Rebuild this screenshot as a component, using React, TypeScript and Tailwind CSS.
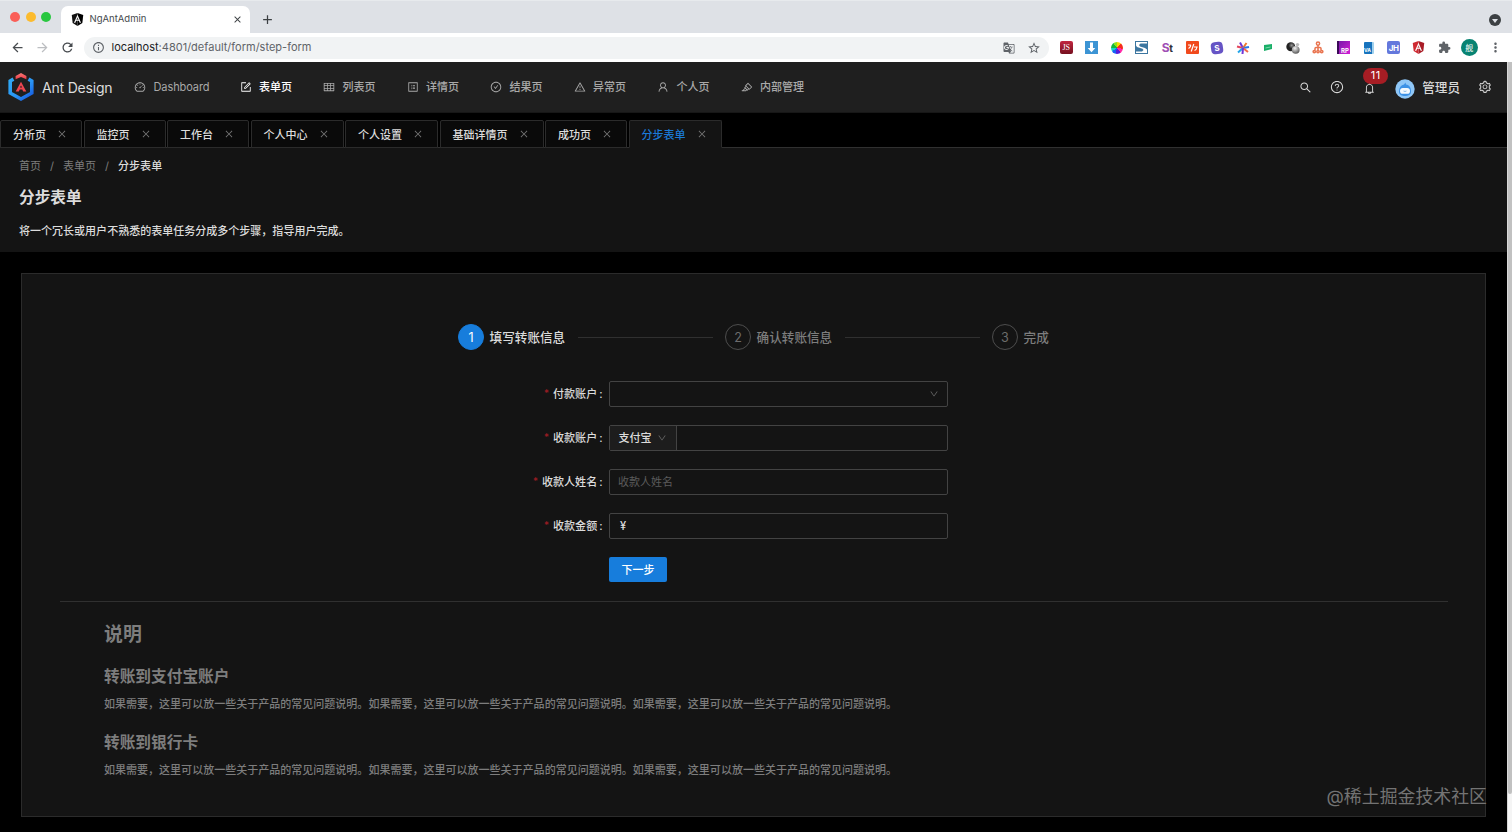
import type { ReactNode } from 'react';
import {
  AiOutlineBell,
  AiOutlineCheckCircle,
  AiOutlineClose,
  AiOutlineDashboard,
  AiOutlineDown,
  AiOutlineForm,
  AiOutlineHighlight,
  AiOutlineProfile,
  AiOutlineQuestionCircle,
  AiOutlineSearch,
  AiOutlineSetting,
  AiOutlineTable,
  AiOutlineUser,
  AiOutlineWarning,
} from 'react-icons/ai';
import {
  MdArrowBack,
  MdArrowForward,
  MdClose,
  MdAdd,
  MdExtension,
  MdGTranslate,
  MdMoreVert,
  MdOutlineInfo,
  MdRefresh,
  MdStarBorder,
} from 'react-icons/md';

const menus = [
  { icon: AiOutlineDashboard, label: 'Dashboard', width: 'w-[105.5px]' },
  { icon: AiOutlineForm, label: '表单页', width: 'w-[83.5px]', active: true },
  { icon: AiOutlineTable, label: '列表页', width: 'w-[83.5px]' },
  { icon: AiOutlineProfile, label: '详情页', width: 'w-[83.5px]' },
  { icon: AiOutlineCheckCircle, label: '结果页', width: 'w-[83.5px]' },
  { icon: AiOutlineWarning, label: '异常页', width: 'w-[83.5px]' },
  { icon: AiOutlineUser, label: '个人页', width: 'w-[83.5px]' },
  { icon: AiOutlineHighlight, label: '内部管理', width: 'w-[83.5px]' },
];

const tabs = [
  { label: '分析页', width: 'w-[82px]' },
  { label: '监控页', width: 'w-[82px]' },
  { label: '工作台', width: 'w-[82px]' },
  { label: '个人中心', width: 'w-[93px]' },
  { label: '个人设置', width: 'w-[93px]' },
  { label: '基础详情页', width: 'w-[104px]' },
  { label: '成功页', width: 'w-[82px]' },
  { label: '分步表单', width: 'w-[93px]', active: true },
];

const faqText = '如果需要，这里可以放一些关于产品的常见问题说明。';

function AngularShield({ size, left, right }: { size: number; left: string; right: string }) {
  return (
    <svg width={size} height={size} viewBox="2 1 20 22">
      <path d="M12 1 2.3 4.5 3.8 18 12 23z" fill={left} />
      <path d="m12 1 9.7 3.5L20.2 18 12 23z" fill={right} />
      <path d="M12 4 6 17.3h2.4l1.2-3h4.8l1.2 3H18zm0 4.4 1.7 4h-3.4z" fill="#fff" />
    </svg>
  );
}

function Logo() {
  return (
    <svg width="26" height="30" viewBox="0 0 26 30">
      <defs>
        <linearGradient id="hex" x1="0" y1="0" x2="1" y2="1">
          <stop offset="0" stopColor="#2fa9f5" />
          <stop offset="0.55" stopColor="#2a95f5" />
          <stop offset="1" stopColor="#1557e0" />
        </linearGradient>
        <linearGradient id="cap" x1="0" y1="0" x2="0" y2="1">
          <stop offset="0" stopColor="#f37b77" />
          <stop offset="1" stopColor="#ee3845" />
        </linearGradient>
      </defs>
      <path d="M5.5 7.2 2.2 9v12L13 27l10.8-6V9l-3.3-1.8" fill="none" stroke="url(#hex)" strokeWidth="3.6" />
      <path d="M13 1 7.6 4.1v3.2L13 4.9l5.4 2.4V4.1z" fill="url(#cap)" />
      <path d="m13 9.7-5.3 9.7h3.1l.9-2h2.6l.9 2h3.1zm0 3.7 1.1 2.2h-2.2z" fill="#ee4650" />
    </svg>
  );
}

function Avatar() {
  return (
    <svg width="20" height="20" viewBox="0 0 20 20">
      <circle cx="10" cy="10" r="9.7" fill="#8fc7f7" />
      <path d="M4 12.5c0-4 2-6.4 5-7l1.5-2 .5 2c3.5.5 5 3 5 7 0 3.5-3 4.5-6 4.5s-6-1-6-4.5z" fill="#3d92e6" />
      <rect x="5" y="9" width="10" height="5.8" rx="2.9" fill="#f4faff" />
      <path d="M8.5 12q1.5 1 3 0" stroke="#5d9fdc" strokeWidth=".7" fill="none" />
    </svg>
  );
}

function Extensions() {
  const icons: ReactNode[] = [
    <span className="flex h-[13px] w-[13px] items-center justify-center rounded-[2px] bg-linear-to-b from-[#c22640] to-[#75101f] font-['Liberation_Serif'] text-[8px] text-white">JS</span>,
    <svg width="13" height="13" viewBox="0 0 13 13">
      <path d="M0 0h13v13H0z" fill="#3c94d4" />
      <path d="M5 1.5h3V7h2.3l-3.8 4.3L2.7 7H5z" fill="#fff" />
    </svg>,
    <span className="h-[12px] w-[12px] rounded-full bg-[conic-gradient(#f7d900_0_12%,#f42e1c_12%_27%,#ff2aa7_27%_40%,#551bdb_40%_54%,#1663f5_54%_66%,#15d5c8_66%_76%,#14b93a_76%_90%,#8fe21b_90%)]" />,
    <svg width="13" height="13" viewBox="0 0 13 13">
      <path d="M0 0h13v13H0z" fill="#3c76a0" />
      <path d="M1 1h11v1.5H5.5L4 4l1 1.5L10 7l2 1.5V12H1v-1.5h6L8.5 9l-1-1.2L2 6 1 4.5z" fill="#fff" />
    </svg>,
    <span className="font-['Inter'] text-[12px] leading-none font-bold tracking-[-0.5px] text-[#a04fb5]">
      S<span className="text-[10px] text-[#303038]">t</span>
    </span>,
    <svg width="13" height="13" viewBox="0 0 13 13">
      <rect width="13" height="13" rx="1" fill="#f1491c" />
      <path d="M2 4h2.5Q5 6 2.5 7.5M7.8 3 5.2 10.5M8 6h3Q10.5 9 8.5 9.5" fill="none" stroke="#fff" strokeWidth="1.2" />
    </svg>,
    <span className="flex h-[12px] w-[12px] rotate-[-8deg] items-center justify-center rounded-[4px] bg-[#6654c5] font-['Inter'] text-[8px] font-bold text-white">S</span>,
    <svg width="14" height="14" viewBox="0 0 14 14" fill="none" strokeWidth="2">
      <path d="M7 7 4 1.5" stroke="#6a35d9" />
      <path d="M7 7 10.5 2" stroke="#f07a2a" />
      <path d="M1 5.5 7 7" stroke="#e4475e" />
      <path d="m7 7 6-1" stroke="#2879e8" />
      <path d="M2 11.5 7 7" stroke="#23a5e9" />
      <path d="m7 7 5 4" stroke="#f3684a" />
      <path d="m7 7-.5 6" stroke="#7236d8" />
    </svg>,
    <svg width="8" height="7" viewBox="0 0 8 7">
      <path d="m0 1 8-1v5L0 7z" fill="#19af68" />
      <path d="m1.5 4 5-1" stroke="#a6e6c6" strokeWidth=".7" />
    </svg>,
    <svg width="14" height="12" viewBox="0 0 14 12">
      <defs>
        <radialGradient id="ballDark" cx=".6" cy=".35" r=".7">
          <stop stopColor="#999" />
          <stop offset=".5" stopColor="#222" />
        </radialGradient>
        <radialGradient id="ballLight" cx=".4" cy=".3" r=".8">
          <stop stopColor="#f2f2f2" />
          <stop offset="1" stopColor="#444" />
        </radialGradient>
      </defs>
      <circle cx="4.8" cy="4.8" r="4.5" fill="url(#ballDark)" />
      <circle cx="9.7" cy="7.8" r="3.9" fill="url(#ballLight)" />
      <circle cx="11.5" cy="2.6" r="1.7" fill="#bbb" />
    </svg>,
    <svg width="12" height="13" viewBox="0 0 12 13" fill="none" stroke="#e9744f" strokeWidth="1.5">
      <circle cx="6" cy="2.6" r="1.6" />
      <path d="M6 4v5M3 9V7.500Q3 6.500 4 6.500h4q1 0 1 1V9" />
      <circle cx="2.3" cy="10.6" r="1.2" />
      <circle cx="6" cy="10.6" r="1.2" />
      <circle cx="9.7" cy="10.6" r="1.2" />
    </svg>,
    <span className="flex h-[13px] w-[13px] items-end justify-end border-l-2 border-[#3b0a58] bg-linear-to-br from-[#7a18a8] to-[#d51bd8] pr-px font-['Inter'] text-[6px] leading-[7px] font-bold text-white">RP</span>,
    <span className="flex h-[12px] w-[10px] items-end justify-center rounded-[1px] border-r-2 border-[#9fd0ec] bg-[#1773bd] font-['Inter'] text-[5px] leading-[7px] font-bold text-white">VA</span>,
    <span className="flex h-[13px] w-[13px] items-center justify-center rounded-[2px] bg-[#6478dc] font-['Inter'] text-[8px] font-bold tracking-[-0.3px] text-white">JH</span>,
    <AngularShield size={13} left="#cf2a32" right="#a91c26" />,
    <MdExtension className="text-[13px] text-[#5f6368]" />,
  ];

  return (
    <div className="flex">
      {icons.map((icon, i) => (
        <span key={i} className="flex h-[17px] w-[25.2px] items-center justify-center">
          {icon}
        </span>
      ))}
    </div>
  );
}

function Browser() {
  return (
    <div className="h-[62px] bg-white font-['Inter'] text-[#5f6368]">
      <div className="flex h-[33px] items-end border-t border-[#e7eaed] bg-[#dee1e6]">
        <div className="flex h-full w-[61px] items-center gap-[5.5px] pl-[10px]">
          <span className="h-[10px] w-[10px] rounded-full bg-[#fa5f58]" />
          <span className="h-[10px] w-[10px] rounded-full bg-[#fcbb2e]" />
          <span className="h-[10px] w-[10px] rounded-full bg-[#29c740]" />
        </div>
        <div className="flex h-[27px] w-[189px] items-center rounded-t-[7px] bg-white pl-[10px]">
          <AngularShield size={13} left="#111" right="#000" />
          <span className="ml-[5.5px] text-[9.5px] text-[#45494d]">NgAntAdmin</span>
          <MdClose className="mr-[7px] ml-auto text-[11px] text-[#3c4043]" />
        </div>
        <MdAdd className="mb-[6px] ml-[10px] text-[15px] text-[#3c4043]" />
        <span className="mr-[11px] mb-[7px] ml-auto flex h-[12px] w-[12px] items-center justify-center rounded-full bg-[#3c4043]">
          <span className="mt-px h-0 w-0 border-x-[3px] border-t-[4px] border-x-transparent border-t-[#dee1e6]" />
        </span>
      </div>
      <div className="flex h-[29px] items-center">
        <MdArrowBack className="ml-[10px] text-[15px] text-[#484c50]" />
        <MdArrowForward className="ml-[10px] text-[15px] text-[#bcbec1]" />
        <MdRefresh className="ml-[10px] text-[15px] text-[#484c50]" />
        <div className="ml-[9px] flex h-[22px] w-[965px] items-center rounded-full bg-[#f1f3f4] pr-[8px] pl-[8px]">
          <MdOutlineInfo className="text-[13px]" />
          <span className="ml-[6.5px] text-[11px] tracking-[0.01px]">
            <span className="text-[#202124]">localhost</span>:4801/default/form/step-form
          </span>
          <MdGTranslate className="ml-auto text-[12px]" />
          <MdStarBorder className="ml-[12px] text-[14px]" />
        </div>
        <div className="ml-[4.7px]">
          <Extensions />
        </div>
        <span className="ml-[4px] flex h-[17px] w-[17px] items-center justify-center rounded-full bg-[#088372] font-['Noto_Sans_CJK_SC'] text-[8px] text-white">舰</span>
        <MdMoreVert className="ml-[10px] text-[15px]" />
      </div>
    </div>
  );
}

function Header() {
  return (
    <header className="flex h-[50px] items-center bg-[#1f1f1f]">
      <div className="flex w-[134px] items-center pl-[8px] text-[14px] text-[#dcdcdc]">
        <Logo />
        <span className="ml-[8px] tracking-[-0.2px]">Ant Design</span>
      </div>
      {menus.map(({ icon: Icon, label, width, active }) => (
        <div key={label} className={`${width} flex shrink-0 items-center gap-[7.5px] whitespace-nowrap ${active ? 'font-medium text-white' : 'text-[#a9a9a9]'}`}>
          <Icon className="text-[12px]" />
          <span className={label === 'Dashboard' ? 'tracking-[-0.1px]' : 'pt-px font-medium'}>{label}</span>
        </div>
      ))}
      <div className="ml-auto flex items-center pr-[15px] text-[#d9d9d9]">
        <AiOutlineSearch className="text-[13px]" />
        <AiOutlineQuestionCircle className="ml-[18px] text-[14px]" />
        <span className="relative ml-[19px]">
          <AiOutlineBell className="mt-[2px] text-[13px]" />
          <span className="absolute -top-[12px] left-0 flex h-[16px] w-[25px] items-center justify-center rounded-full bg-[#a61d24] text-[11px] tracking-[0.5px] text-white">11</span>
        </span>
        <span className="mt-[3px] ml-[19px]">
          <Avatar />
        </span>
        <span className="ml-[7px] pt-[2px] text-[12.6px] font-medium">管理员</span>
        <AiOutlineSetting className="ml-[18px] text-[14px]" />
      </div>
    </header>
  );
}

function PageTabs() {
  return (
    <div className="flex h-[36px] items-end gap-[1.5px] border-t border-[#171717] bg-black shadow-[inset_0_-1px_0_#303030]">
      {tabs.map((tab) => (
        <div
          key={tab.label}
          className={`${tab.width} flex h-[28px] shrink-0 items-center justify-between rounded-t-[2px] border border-[#2b2b2b] pr-[14px] pl-[12px] ${
            tab.active ? 'border-b-[#141414] bg-[#141414] text-[#1b79d6]' : 'bg-[#0a0a0a] text-[#dcdcdc]'
          }`}
        >
          <span className="pt-[2px] font-medium">{tab.label}</span>
          <AiOutlineClose className="text-[10px] text-[#777]" />
        </div>
      ))}
    </div>
  );
}

function Step({ n, title, active, last }: { n: number; title: string; active?: boolean; last?: boolean }) {
  return (
    <div className={`flex items-center ${last ? '' : 'w-[267px]'}`}>
      <span className={`flex h-[26px] w-[26px] items-center justify-center rounded-full border pt-[2px] text-[12.6px] ${active ? 'border-[#177ddc] bg-[#177ddc] text-white' : 'border-[#4d4d4d] text-[#6c6c6c]'}`}>
        {n}
      </span>
      <span className={`ml-[5.6px] pt-[2px] text-[12.6px] font-medium ${active ? 'text-[#dcdcdc]' : 'text-[#7d7d7d]'}`}>{title}</span>
      {!last && <span className="mr-[12px] ml-[13px] h-px flex-1 bg-[#303030]" />}
    </div>
  );
}

function Field({ label, children }: { label: string; children: ReactNode }) {
  return (
    <div className="flex h-[26px] items-center">
      <span className="flex w-[583px] items-center justify-end pr-[6.5px] font-medium text-[#dcdcdc]">
        <span className="mr-[4px] text-[10px] font-normal text-[#a61d24]">*</span>
        {label}
        <span className="ml-[2px]">:</span>
      </span>
      <div className="flex h-[26px] w-[339px] items-center rounded-[2px] border border-[#434343]">{children}</div>
    </div>
  );
}

function Faq({ title }: { title: string }) {
  return (
    <div className="mb-[18px]">
      <h4 className="text-[15.7px] leading-[24px] font-bold">{title}</h4>
      <p className="mt-[6px] text-[11.03px] leading-[18px] font-medium">{faqText.repeat(3)}</p>
    </div>
  );
}

export default function App() {
  return (
    <div className="h-[832px] w-[1512px] overflow-hidden bg-black">
      <Browser />
      <div className="flex h-[770px] font-['Inter','Noto_Sans_CJK_SC',sans-serif] text-[11.03px]">
        <div className="w-[1507px]">
          <Header />
          <PageTabs />
          <div className="h-[104px] bg-[#141414] pl-[19px] text-[#dcdcdc]">
            <div className="flex items-center pt-[9px] leading-[18px] text-[#7d7d7d]">
              首页<span className="mx-[9px]">/</span>表单页<span className="mx-[9px]">/</span>
              <span className="font-medium text-[#dcdcdc]">分步表单</span>
            </div>
            <h1 className="mt-[10px] text-[15.7px] leading-[25px] font-bold">分步表单</h1>
            <p className="mt-[12px] leading-[18px] font-medium">将一个冗长或用户不熟悉的表单任务分成多个步骤，指导用户完成。</p>
          </div>

          <div className="relative mt-[21px] ml-[21px] h-[544px] w-[1465px] border border-[#2b2b2b] bg-[#141414]">
            <div className="flex pt-[50px] pl-[436px]">
              <Step n={1} title="填写转账信息" active />
              <Step n={2} title="确认转账信息" />
              <Step n={3} title="完成" last />
            </div>

            <form className="mt-[31px] flex flex-col gap-[18px] pl-[4px]">
              <Field label="付款账户">
                <AiOutlineDown className="mr-[8px] ml-auto text-[10px] text-[#6a6a6a]" />
              </Field>
              <Field label="收款账户">
                <span className="flex h-full w-[67px] items-center justify-between border-r border-[#434343] bg-[#1d1d1d] pr-[9px] pl-[8.4px] font-medium text-[#dcdcdc]">
                  支付宝
                  <AiOutlineDown className="text-[10px] text-[#6a6a6a]" />
                </span>
              </Field>
              <Field label="收款人姓名">
                <span className="pl-[8px] text-[#5b5b5b]">收款人姓名</span>
              </Field>
              <Field label="收款金额">
                <span className="pl-[10px] font-medium text-[#dcdcdc]">¥</span>
              </Field>
              <button type="button" className="ml-[583px] h-[25px] w-[58px] rounded-[2px] bg-[#177ddc] pt-px font-medium text-white">
                下一步
              </button>
            </form>

            <div className="mt-[19px] mr-[37px] ml-[38px] h-px bg-[#303030]" />

            <div className="pl-[82px] text-[#7d7d7d]">
              <h3 className="mt-[19px] mb-[16px] text-[18.9px] leading-[28px] font-bold">说明</h3>
              <Faq title="转账到支付宝账户" />
              <Faq title="转账到银行卡" />
            </div>

            <span className="absolute -right-[2px] bottom-[6px] text-[17.9px] leading-[26px] whitespace-nowrap text-[#737373]">@稀土掘金技术社区</span>
          </div>
        </div>
        <div className="w-[5px] border-l border-[#d8d8d8] bg-[#f5f5f5]">
          <div className="h-[732px] rounded-b bg-[#c1c1c1]" />
        </div>
      </div>
    </div>
  );
}
